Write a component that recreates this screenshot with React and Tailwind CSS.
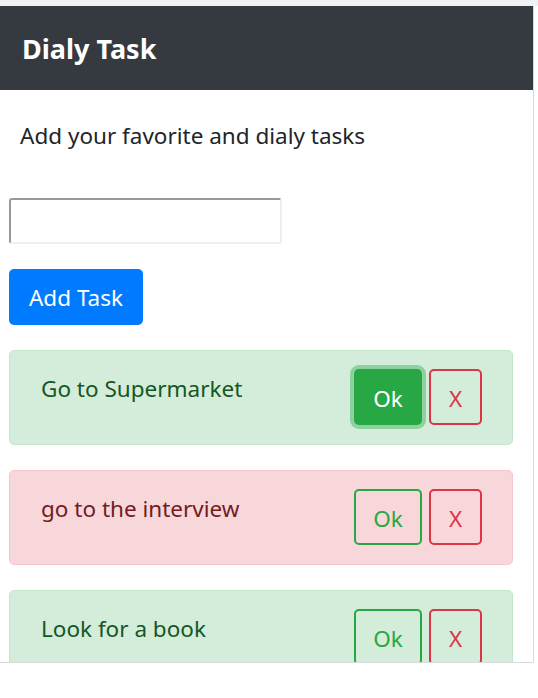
const tasks = [
  { text: "Go to Supermarket", done: true, focused: true },
  { text: "go to the interview", done: false },
  { text: "Look for a book", done: true },
];

function TaskCard({ task }) {
  const card = task.done
    ? "bg-[#d4edda] border-[#c3e6cb] text-[#155724]"
    : "bg-[#f8d7da] border-[#f5c6cb] text-[#721c24]";
  const ok = task.focused
    ? "bg-[#28a745] border-[#28a745] text-white shadow-[0_0_0_4px_rgba(72,180,97,0.5)]"
    : "bg-transparent border-[#28a745] text-[#28a745]";

  return (
    <div className={`flex items-start justify-between rounded-[5px] border pl-[31px] pr-[30px] pt-[18px] pb-[19px] ${card}`}>
      <p className="mt-[3px] text-[22.5px] leading-[33px]">{task.text}</p>
      <div className="flex gap-[7px]">
        <button className={`h-[56px] w-[68px] rounded-[5px] border-2 pt-[3px] text-[22.5px] ${ok}`}>Ok</button>
        <button className="h-[56px] w-[53px] rounded-[5px] border-2 border-[#dc3545] pt-[3px] text-[22.5px] text-[#dc3545]">X</button>
      </div>
    </div>
  );
}

export default function App() {
  return (
    <div className="h-[698px] w-[538px] overflow-hidden bg-white font-['Segoe_UI','Noto_Sans',sans-serif]">
      <div className="h-[6px] bg-[#f1f1f1]" />
      <div className="h-[657px] w-[534px] overflow-hidden border-r border-b border-[#d9d9d9] bg-white">
        <header className="flex h-[84px] items-center bg-[#343a40] px-[22px] pt-[2px]">
          <h1 className="text-[27px] font-bold text-white">Dialy Task</h1>
        </header>

        <p className="mt-[29px] px-[20px] text-[22.5px] leading-[33px] text-[#212529]">
          Add your favorite and dialy tasks
        </p>

        <div className="px-[9px]">
          <input
            type="text"
            className="mt-[46px] block h-[46px] w-[273px] rounded-[3px] border-2 border-t-[#999] border-l-[#999] border-r-[#eee] border-b-[#eee] outline-none"
          />
          <button className="mt-[25px] h-[56px] w-[134px] rounded-[5px] bg-[#007bff] pt-[1px] text-[22.5px] text-white">
            Add Task
          </button>

          <div className="mt-[25px] flex w-[504px] flex-col gap-[25px]">
            {tasks.map((t) => (
              <TaskCard key={t.text} task={t} />
            ))}
          </div>
        </div>
      </div>
    </div>
  );
}
